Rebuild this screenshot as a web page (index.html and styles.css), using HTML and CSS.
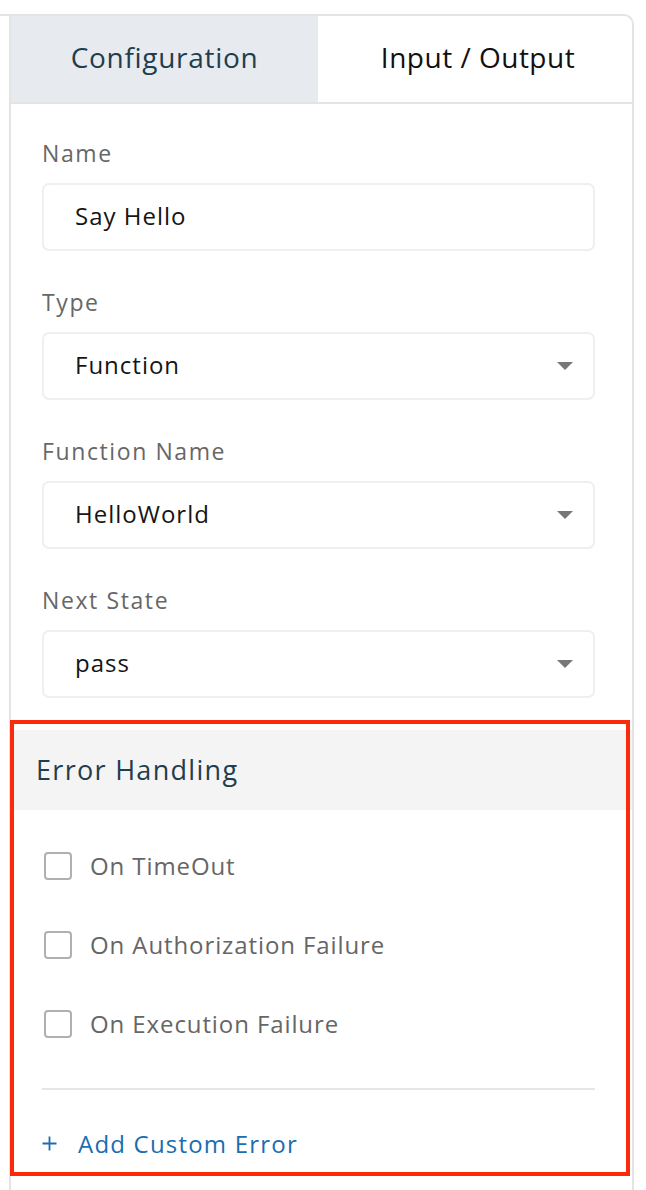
FILE: index.html
```html
<!DOCTYPE html>
<html lang="en">
<head>
    <meta charset="UTF-8">
    <meta name="viewport" content="width=device-width, initial-scale=1.0">
    <title>State Configuration</title>
    <link rel="stylesheet" href="styles.css">
</head>
<body>
    <div class="frame">
        <div class="panel">
            <div class="tabs">
                <div class="tab tab-active">Configuration</div>
                <div class="tab">Input / Output</div>
            </div>

            <div class="form">
                <div class="field">
                    <div class="field-label">Name</div>
                    <div class="input">Say Hello</div>
                </div>

                <div class="field">
                    <div class="field-label">Type</div>
                    <div class="input select">Function<span class="caret"></span></div>
                </div>

                <div class="field">
                    <div class="field-label">Function Name</div>
                    <div class="input select">HelloWorld<span class="caret"></span></div>
                </div>

                <div class="field">
                    <div class="field-label">Next State</div>
                    <div class="input select">pass<span class="caret"></span></div>
                </div>
            </div>

            <div class="errors">
                <div class="errors-title">Error Handling</div>

                <div class="checks">
                    <div class="check"><span class="box"></span>On TimeOut</div>
                    <div class="check"><span class="box"></span>On Authorization Failure</div>
                    <div class="check"><span class="box"></span>On Execution Failure</div>
                </div>

                <div class="divider"></div>

                <div class="add-error">
                    <svg class="plus" width="15" height="15" viewBox="0 0 15 15">
                        <path d="M7.5 0.5 V14.5 M0.5 7.5 H14.5" stroke="#1a6db0" stroke-width="1.8" fill="none"/>
                    </svg>
                    Add Custom Error
                </div>
            </div>
        </div>

        <!-- annotation box over the error section -->
        <div class="highlight"></div>
    </div>
</body>
</html>
```

FILE: styles.css
```css
* {
    margin: 0;
    padding: 0;
    box-sizing: border-box;
    font-family: "Open Sans", Lato, sans-serif;
}

body {
    background-color: #fff;
    height: 1190px;
    overflow: hidden;
}

.frame {
    position: relative;
    margin-top: 14px;
    width: 634px;
    height: 1200px;
    border-top: 2px solid #e4e4e4;
    border-right: 2px solid #e4e4e4;
    border-top-right-radius: 10px;
}

.panel {
    margin-left: 9px;
    height: 100%;
    border-left: 2px solid #e4e4e4;
}

/* Tabs */
.tabs {
    display: flex;
    height: 88px;
    border-bottom: 2px solid #e4e4e4;
}

.tab {
    flex: 1;
    display: flex;
    align-items: center;
    justify-content: center;
    font-size: 28px;
    letter-spacing: 0.7px;
    color: #111;
    padding-bottom: 4px;
}

.tab:last-child {
    padding-left: 6px;
    letter-spacing: 0.5px;
}

.tab-active {
    flex: 0 0 307px;
    background-color: #e7eaee;
    color: #1f3e4d;
}

/* Form fields */
.form {
    padding: 35px 37px 32px 31px;
}

.field {
    margin-bottom: 37px;
}

.field:last-child {
    margin-bottom: 0;
}

.field-label {
    font-size: 23px;
    letter-spacing: 1.6px;
    line-height: 28px;
    color: #676767;
    margin-bottom: 16px;
}

.input {
    position: relative;
    height: 68px;
    border: 2px solid #efefef;
    border-radius: 7px;
    padding-left: 31px;
    padding-bottom: 4px;
    display: flex;
    align-items: center;
    font-size: 24px;
    letter-spacing: 1px;
    color: #151515;
}

.caret {
    position: absolute;
    right: 20px;
    top: 28px;
    width: 0;
    height: 0;
    border-left: 8px solid transparent;
    border-right: 8px solid transparent;
    border-top: 8px solid #777;
}

/* Error handling */
.errors-title {
    height: 80px;
    background-color: #f4f4f4;
    padding-left: 25px;
    padding-bottom: 2px;
    display: flex;
    align-items: center;
    font-size: 27px;
    letter-spacing: 1.3px;
    color: #1f3e4d;
}

.checks {
    padding: 16px 37px 0 33px;
}

.check {
    height: 79px;
    display: flex;
    align-items: center;
    font-size: 24px;
    letter-spacing: 0.9px;
    color: #666;
}

.box {
    width: 28px;
    height: 28px;
    border: 2px solid #b0b0b0;
    border-radius: 4px;
    margin-right: 18px;
}

.divider {
    margin: 25px 37px 0 31px;
    height: 2px;
    background-color: #e6e6e6;
}

.add-error {
    margin: 38px 0 0 31px;
    height: 30px;
    display: flex;
    align-items: center;
    font-size: 24px;
    letter-spacing: 1.2px;
    color: #1a6db0;
}

.plus {
    margin-right: 21px;
}

.highlight {
    position: absolute;
    top: 704px;
    left: 10px;
    width: 620px;
    height: 456px;
    border: 4px solid #fa2a0a;
}
```
